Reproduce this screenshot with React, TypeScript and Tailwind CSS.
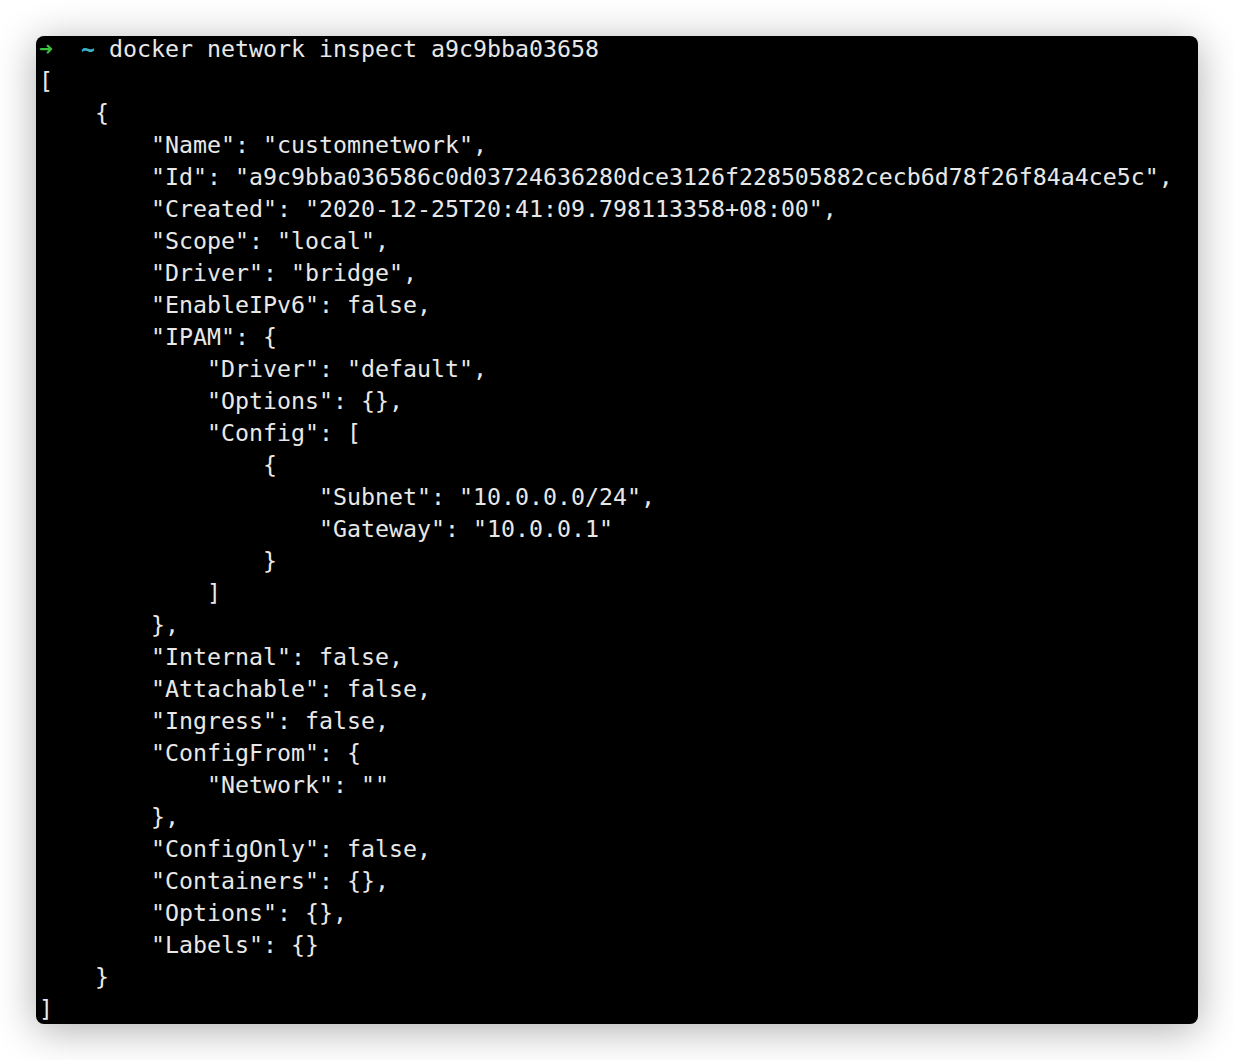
const lines: string[] = [
  "[",
  "    {",
  '        "Name": "customnetwork",',
  '        "Id": "a9c9bba036586c0d03724636280dce3126f228505882cecb6d78f26f84a4ce5c",',
  '        "Created": "2020-12-25T20:41:09.798113358+08:00",',
  '        "Scope": "local",',
  '        "Driver": "bridge",',
  '        "EnableIPv6": false,',
  '        "IPAM": {',
  '            "Driver": "default",',
  '            "Options": {},',
  '            "Config": [',
  "                {",
  '                    "Subnet": "10.0.0.0/24",',
  '                    "Gateway": "10.0.0.1"',
  "                }",
  "            ]",
  "        },",
  '        "Internal": false,',
  '        "Attachable": false,',
  '        "Ingress": false,',
  '        "ConfigFrom": {',
  '            "Network": ""',
  "        },",
  '        "ConfigOnly": false,',
  '        "Containers": {},',
  '        "Options": {},',
  '        "Labels": {}',
  "    }",
  "]",
];

export default function App() {
  return (
    <div className="w-[1234px] h-[1060px] bg-white pt-[36px] pl-[36px]">
      <div className="w-[1162px] h-[988px] bg-black rounded-[8px] overflow-hidden shadow-[0_6px_40px_rgba(0,0,0,0.32)]">
        <div className="-mt-[3px] pl-[3px] text-[#e8e8e8] text-[23.25px] leading-[32px] whitespace-pre font-['DejaVu_Sans_Mono',monospace]">
          <div>
            <span className="text-[#3fbf3f] font-bold">➜</span>
            {"  "}
            <span className="text-[#3cb0c4] font-bold">~</span>
            {" docker network inspect a9c9bba03658"}
          </div>
          {lines.map((l, i) => (
            <div key={i}>{l}</div>
          ))}
        </div>
      </div>
    </div>
  );
}
